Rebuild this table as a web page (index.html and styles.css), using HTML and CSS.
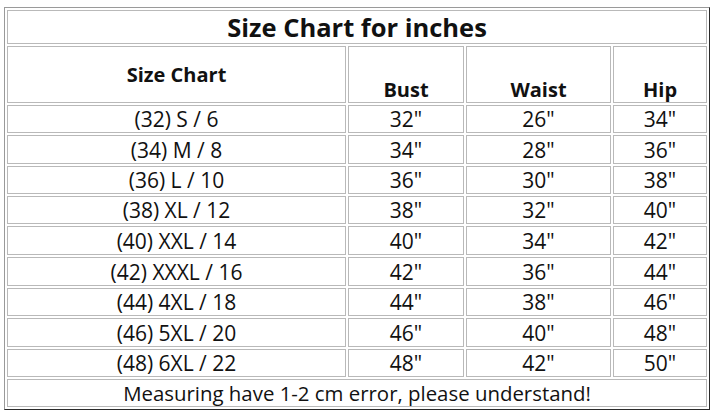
FILE: index.html
```html
<!DOCTYPE html>
<html>
<head>
<meta charset="utf-8">
<link rel="stylesheet" href="styles.css">
</head>
<body>
<table class="chart">
  <colgroup>
    <col class="c1"><col class="c2"><col class="c3"><col class="c4">
  </colgroup>
  <tr class="title-row"><th colspan="4" class="title">Size Chart for inches</th></tr>
  <tr class="head-row">
    <th class="h-main">Size Chart</th>
    <th class="h-sub">Bust</th>
    <th class="h-sub">Waist</th>
    <th class="h-sub">Hip</th>
  </tr>
  <tr class="r28"><td>(32) S / 6</td><td>32"</td><td>26"</td><td>34"</td></tr>
  <tr class="r29"><td>(34) M / 8</td><td>34"</td><td>28"</td><td>36"</td></tr>
  <tr class="r28"><td>(36) L / 10</td><td>36"</td><td>30"</td><td>38"</td></tr>
  <tr class="r28"><td>(38) XL / 12</td><td>38"</td><td>32"</td><td>40"</td></tr>
  <tr class="r29"><td>(40) XXL / 14</td><td>40"</td><td>34"</td><td>42"</td></tr>
  <tr class="r29"><td>(42) XXXL / 16</td><td>42"</td><td>36"</td><td>44"</td></tr>
  <tr class="r28"><td>(44) 4XL / 18</td><td>44"</td><td>38"</td><td>46"</td></tr>
  <tr class="r29"><td>(46) 5XL / 20</td><td>46"</td><td>40"</td><td>48"</td></tr>
  <tr class="r28"><td>(48) 6XL / 22</td><td>48"</td><td>42"</td><td>50"</td></tr>
  <tr class="r28"><td colspan="4" class="note">Measuring have 1-2 cm error, please understand!</td></tr>
</table>
</body>
</html>
```

FILE: styles.css
```css
html, body {
  margin: 0;
  padding: 0;
  background: #ffffff;
}

body {
  padding: 7px 0 0 4px;
  font-family: "Open Sans", "Noto Sans", sans-serif;
  color: #111111;
}

.chart {
  width: 706px;
  table-layout: fixed;
  border-collapse: separate;
  border-spacing: 2px;
  border-style: solid;
  border-width: 1px;
  border-color: #9a9a9a #2a2a2a #2a2a2a #9a9a9a;
}

.c1 { width: 339px; }
.c2 { width: 116px; }
.c3 { width: 145px; }
.c4 { width: 94px; }

.chart th,
.chart td {
  border: 1px solid #b9b9b9;
  padding: 0;
  text-align: center;
  box-sizing: border-box;
}

.chart td {
  font-size: 21px;
  line-height: 26px;
  vertical-align: middle;
}

.title-row { height: 34px; }
.title {
  font-size: 25.5px;
  font-weight: 700;
  line-height: 32px;
}

.head-row { height: 57px; }
.h-main {
  font-size: 20px;
  font-weight: 700;
  vertical-align: middle;
  padding-bottom: 2px;
}
.h-sub {
  font-size: 20px;
  font-weight: 700;
  vertical-align: bottom;
  line-height: 24px;
  padding-bottom: 1px;
}

.r28 { height: 28px; }
.r29 { height: 29px; }

.chart .note {
  font-size: 20.4px;
}
```
